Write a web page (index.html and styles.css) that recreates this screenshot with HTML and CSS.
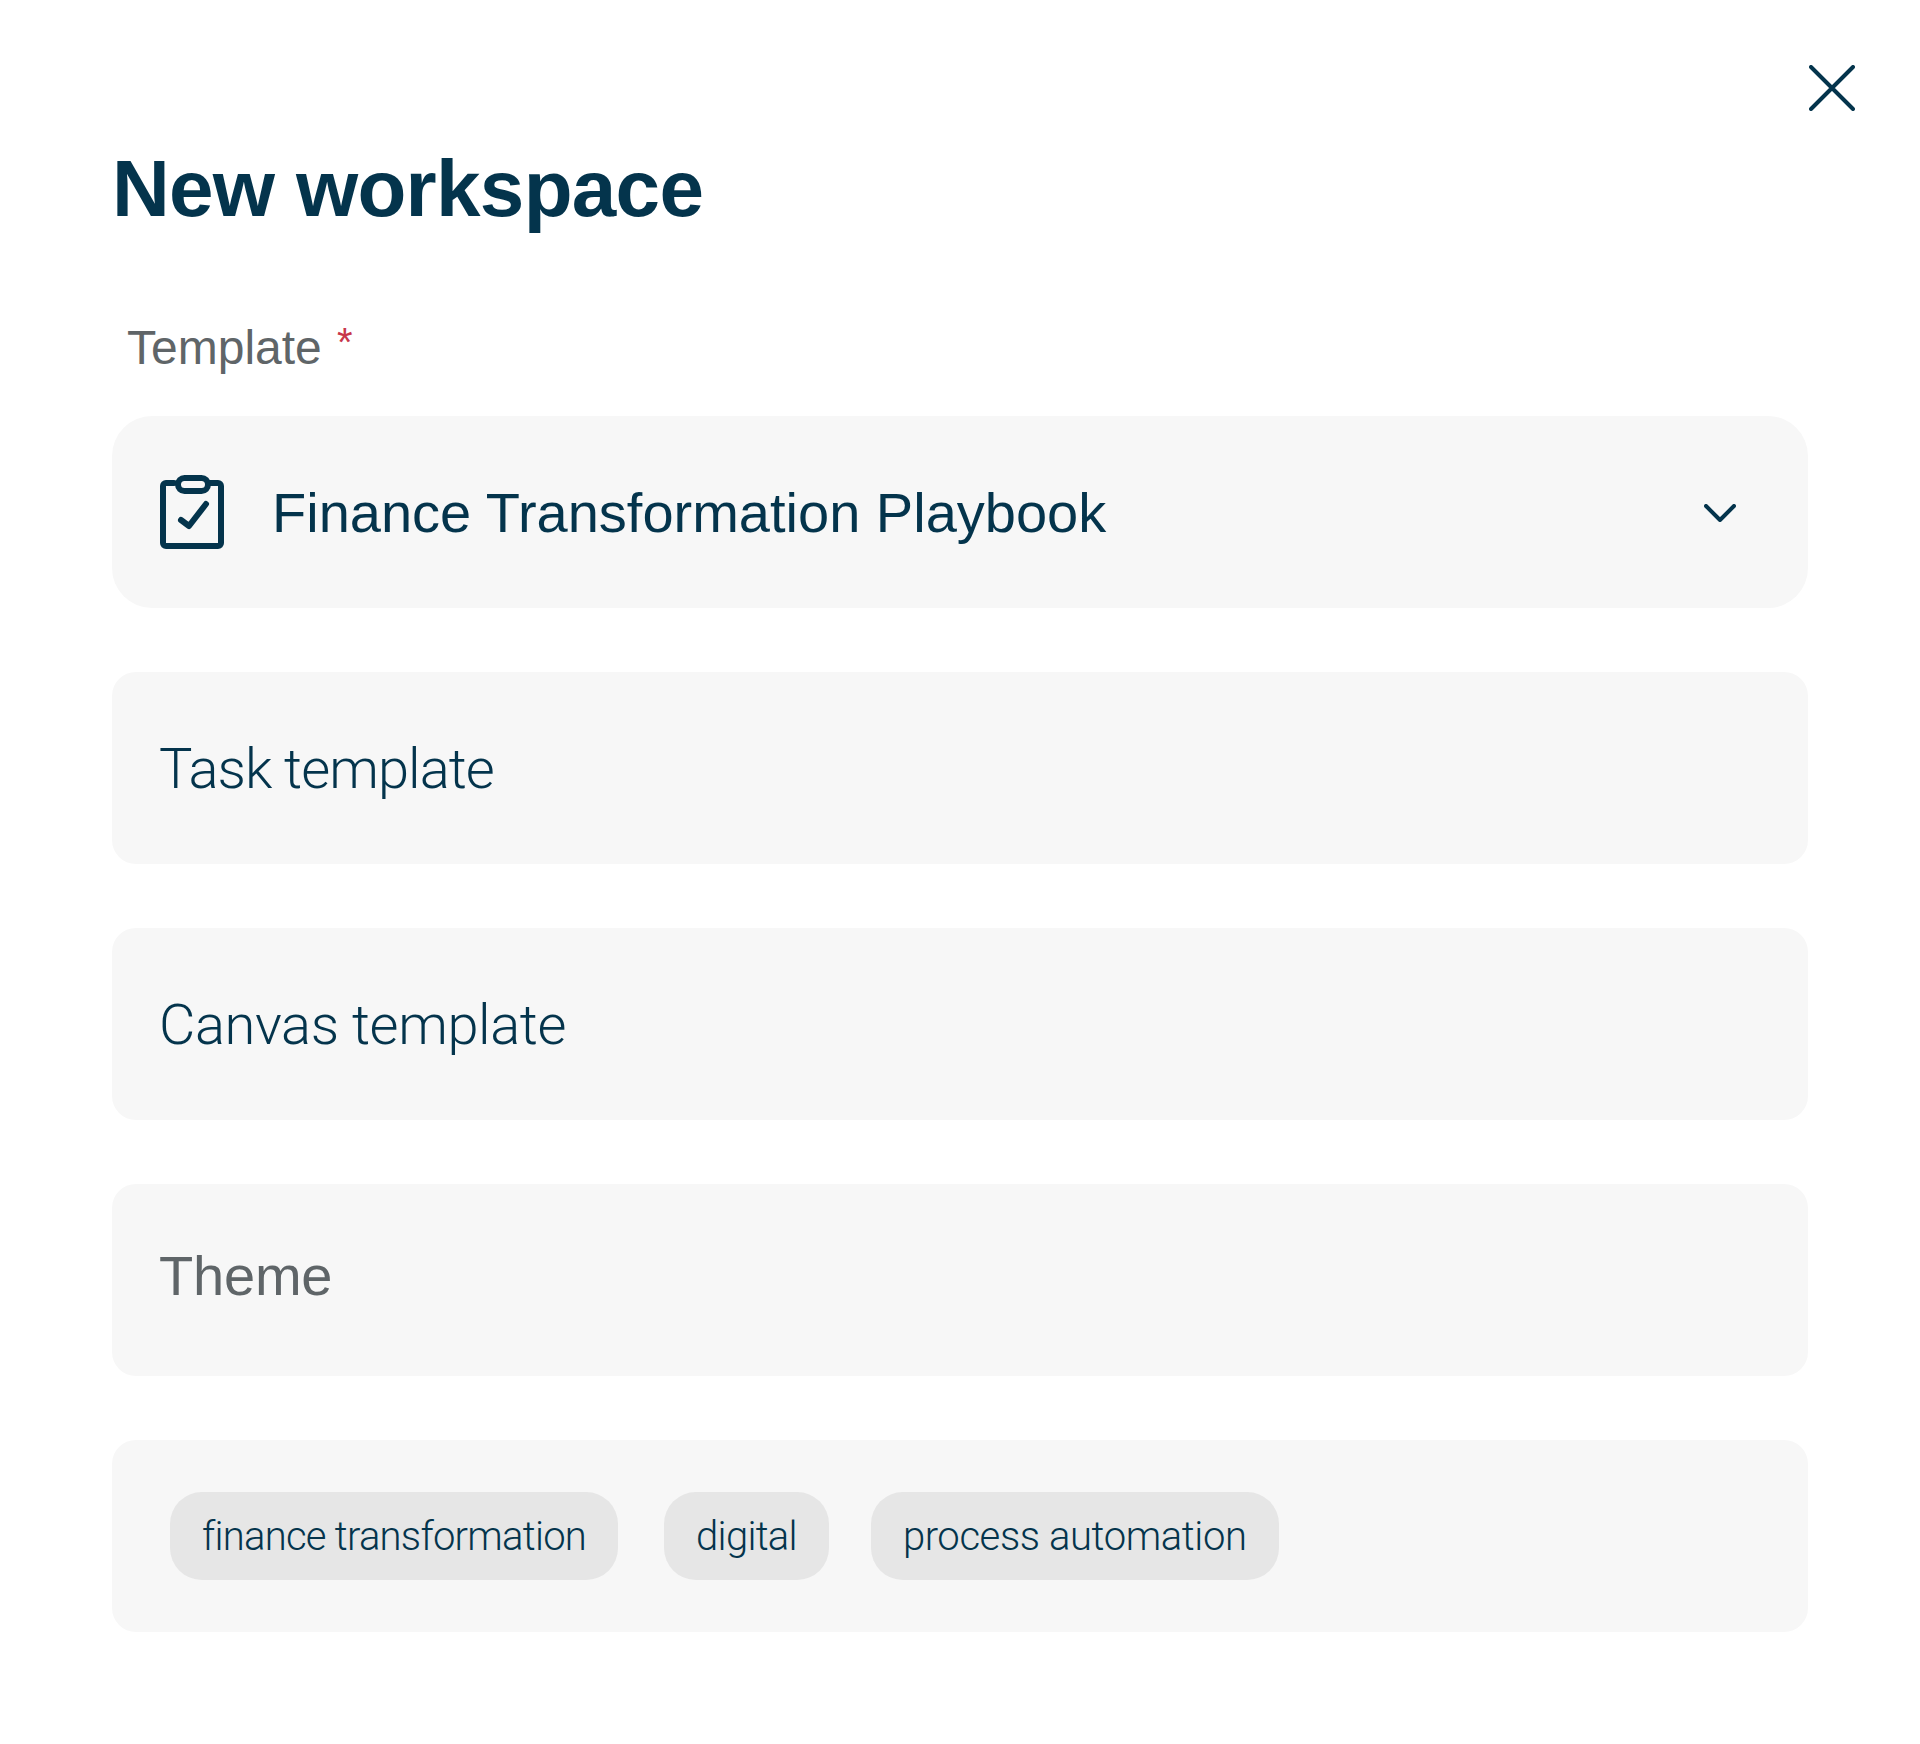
FILE: index.html
```html
<!DOCTYPE html>
<html lang="en">
<head>
<meta charset="utf-8">
<title>New workspace</title>
<link rel="stylesheet" href="styles.css">
</head>
<body>
<main class="dialog">
  <div class="topbar">
    <button class="close" aria-label="Close">
      <svg class="close-icon" viewBox="0 0 46 46"><path d="M2 2 L44 44 M44 2 L2 44"/></svg>
    </button>
  </div>
  <h1 class="title">New workspace</h1>
  <div class="label">Template <span class="req">*</span></div>
  <div class="field field-select">
    <svg class="clip" viewBox="0 0 64 74">
      <path d="M14 8 H6 a3 3 0 0 0 -3 3 V68 a3 3 0 0 0 3 3 H58 a3 3 0 0 0 3 -3 V11 a3 3 0 0 0 -3 -3 H50"/>
      <rect x="18" y="3" width="30" height="13" rx="6.5"/>
      <path d="M21 45 L29 51 L46 29"/>
    </svg>
    <span class="value">Finance Transformation Playbook</span>
    <svg class="chev" viewBox="0 0 32 18"><path d="M2 2 L16 16 L30 2"/></svg>
  </div>
  <div class="field"><span class="value light task">Task template</span></div>
  <div class="field"><span class="value light canvas">Canvas template</span></div>
  <div class="field field-theme"><span class="value muted">Theme</span></div>
  <div class="field field-tags">
    <span class="chip chip-a">finance transformation</span>
    <span class="chip chip-b">digital</span>
    <span class="chip chip-c">process automation</span>
  </div>
</main>
</body>
</html>
```
FILE: styles.css
```css
* { box-sizing: border-box; }
html, body { margin: 0; background: #fff; }
body { font-family: "Liberation Sans", Arial, sans-serif; color: #04344c; }
.dialog { width: 1920px; height: 1744px; padding: 65px 112px 0; }
.topbar { display: flex; justify-content: flex-end; height: 46px; margin-right: -47px; }
.close { width: 46px; height: 46px; padding: 0; border: 0; background: none; }
.close-icon { display: block; width: 46px; height: 46px; fill: none; stroke: #04344c; stroke-width: 4; stroke-linecap: round; }
.title { margin: 32px 0 0; font-size: 80px; line-height: 92px; font-weight: 700; color: #04344c; letter-spacing: -0.7px; }
.label { margin: 79px 0 0 15px; height: 102px; font-size: 48px; line-height: 56px; color: #5f6568; font-weight: 400; }
.req { color: #c8374a; font-size: 40px; vertical-align: 8px; margin-left: 2px; }
.field { display: flex; align-items: center; height: 192px; margin-bottom: 64px; padding: 2px 47px 0; background: #f7f7f7; border-radius: 24px; }
.field-select { border-radius: 40px; padding-left: 48px; }
.field-theme { padding-top: 0; padding-bottom: 8px; }
.value { font-size: 56px; line-height: 64px; color: #04344c; }
.light { font-family: Roboto, "Liberation Sans", sans-serif; font-weight: 300; }
.task { letter-spacing: -0.95px; }
.canvas { letter-spacing: -0.4px; }
.muted { color: #5f6568; letter-spacing: -0.2px; }
.clip { width: 64px; height: 74px; margin: 0 48px 3px 0; fill: none; stroke: #04344c; stroke-width: 6; stroke-linecap: round; stroke-linejoin: round; }
.chev { width: 32px; height: 18px; margin-left: auto; margin-right: 25px; fill: none; stroke: #04344c; stroke-width: 4; stroke-linecap: round; stroke-linejoin: round; }
.field-tags { padding: 0 58px; margin-bottom: 0; }
.chip { display: flex; align-items: center; height: 88px; padding: 0 32px; background: #e6e6e6; border-radius: 32px; font-family: Roboto, "Liberation Sans", sans-serif; font-weight: 300; font-size: 40px; color: #04344c; }
.chip-a { margin-right: 46px; letter-spacing: -0.74px; }
.chip-b { margin-right: 42px; letter-spacing: -0.7px; }
.chip-c { letter-spacing: -0.4px; }
```
